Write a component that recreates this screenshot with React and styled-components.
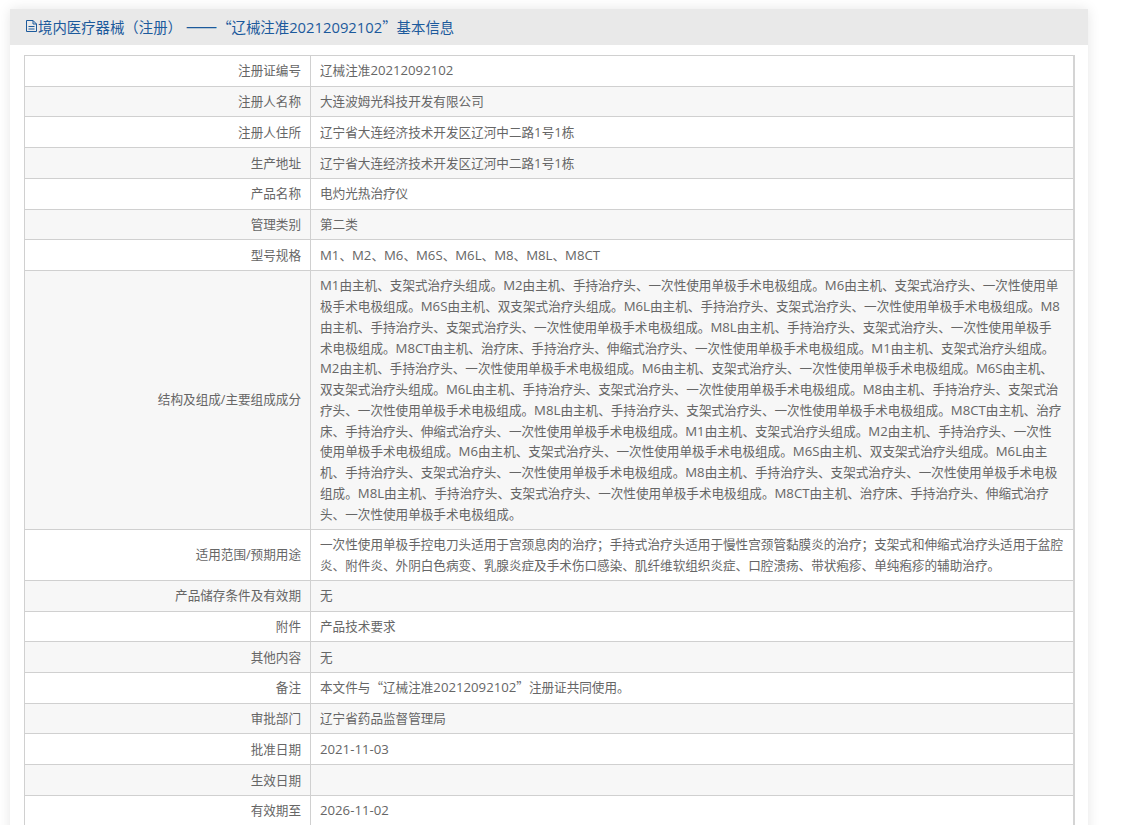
import React from 'react';
import styled, { createGlobalStyle } from 'styled-components';

const GlobalStyle = createGlobalStyle`
    html, body {
        margin: 0;
        height: 825px;
        overflow: hidden;
        background: #fff;
        font-family: "Open Sans", "Noto Sans CJK SC", sans-serif;
    }
`;

const rows = [
    ['注册证编号', '辽械注准20212092102'],
    ['注册人名称', '大连波姆光科技开发有限公司'],
    ['注册人住所', '辽宁省大连经济技术开发区辽河中二路1号1栋'],
    ['生产地址', '辽宁省大连经济技术开发区辽河中二路1号1栋'],
    ['产品名称', '电灼光热治疗仪'],
    ['管理类别', '第二类'],
    ['型号规格', 'M1、M2、M6、M6S、M6L、M8、M8L、M8CT'],
    ['结构及组成/主要组成成分', 'M1由主机、支架式治疗头组成。M2由主机、手持治疗头、一次性使用单极手术电极组成。M6由主机、支架式治疗头、一次性使用单极手术电极组成。M6S由主机、双支架式治疗头组成。M6L由主机、手持治疗头、支架式治疗头、一次性使用单极手术电极组成。M8由主机、手持治疗头、支架式治疗头、一次性使用单极手术电极组成。M8L由主机、手持治疗头、支架式治疗头、一次性使用单极手术电极组成。M8CT由主机、治疗床、手持治疗头、伸缩式治疗头、一次性使用单极手术电极组成。M1由主机、支架式治疗头组成。M2由主机、手持治疗头、一次性使用单极手术电极组成。M6由主机、支架式治疗头、一次性使用单极手术电极组成。M6S由主机、双支架式治疗头组成。M6L由主机、手持治疗头、支架式治疗头、一次性使用单极手术电极组成。M8由主机、手持治疗头、支架式治疗头、一次性使用单极手术电极组成。M8L由主机、手持治疗头、支架式治疗头、一次性使用单极手术电极组成。M8CT由主机、治疗床、手持治疗头、伸缩式治疗头、一次性使用单极手术电极组成。M1由主机、支架式治疗头组成。M2由主机、手持治疗头、一次性使用单极手术电极组成。M6由主机、支架式治疗头、一次性使用单极手术电极组成。M6S由主机、双支架式治疗头组成。M6L由主机、手持治疗头、支架式治疗头、一次性使用单极手术电极组成。M8由主机、手持治疗头、支架式治疗头、一次性使用单极手术电极组成。M8L由主机、手持治疗头、支架式治疗头、一次性使用单极手术电极组成。M8CT由主机、治疗床、手持治疗头、伸缩式治疗头、一次性使用单极手术电极组成。'],
    ['适用范围/预期用途', '一次性使用单极手控电刀头适用于宫颈息肉的治疗；手持式治疗头适用于慢性宫颈管黏膜炎的治疗；支架式和伸缩式治疗头适用于盆腔炎、附件炎、外阴白色病变、乳腺炎症及手术伤口感染、肌纤维软组织炎症、口腔溃疡、带状疱疹、单纯疱疹的辅助治疗。'],
    ['产品储存条件及有效期', '无'],
    ['附件', '产品技术要求'],
    ['其他内容', '无'],
    ['备注', '本文件与“辽械注准20212092102”注册证共同使用。'],
    ['审批部门', '辽宁省药品监督管理局'],
    ['批准日期', '2021-11-03'],
    ['生效日期', ''],
    ['有效期至', '2026-11-02'],
];

const Latin = styled.span`
    font-size: ${p => p.$size};
    line-height: 0;
`;

const Quote = styled.span`
    font-family: "Noto Sans CJK SC", sans-serif;
    line-height: 0;
`;

// latin runs sit a little larger than the chinese around them
function Mixed({ text, size }) {
    return text.split(/([A-Za-z0-9-]+|[“”])/).map((part, i) => {
        if (part === '“' || part === '”') return <Quote key={i}>{part}</Quote>;
        if (i % 2 === 1) return <Latin key={i} $size={size}>{part}</Latin>;
        return part;
    });
}

const Panel = styled.section`
    width: 1078px;
    margin: 9px 0 0 10px;
    padding-bottom: 20px;
    background: #fff;
    box-shadow: 0 0 12px rgba(0, 0, 0, 0.1);
`;

const Header = styled.h2`
    display: flex;
    align-items: center;
    box-sizing: border-box;
    height: 36px;
    margin: 0;
    padding: 0 0 2px 15px;
    background: #e9e9e9;
    color: #1c5a9c;
    font-size: 14.4px;
    font-weight: 400;
`;

const Title = styled.span`
    white-space: pre;
`;

const Dash = styled.span`
    font-family: "Noto Sans CJK SC", sans-serif;
    font-size: 18.8px;
    line-height: 0;
`;

const Icon = styled.svg`
    width: 13px;
    height: 14px;
    flex: none;
    fill: none;
    stroke: currentColor;
    stroke-width: 1;
`;

const Table = styled.table`
    width: 1051px;
    margin: 10px 0 0 14px;
    border-collapse: collapse;
    table-layout: fixed;
    color: #666;
    font-size: 12.6px;
    line-height: 20.8px;
`;

const Row = styled.tr`
    background: ${p => (p.$striped ? '#f7f7f7' : '#fff')};
`;

const Label = styled.th`
    box-sizing: border-box;
    width: 286px;
    height: 30.71px;
    padding: 5.2px 9px 3.2px;
    border: 1px solid #d0d0d0;
    font-weight: 400;
    text-align: right;
`;

const Value = styled.td`
    box-sizing: border-box;
    padding: 5.2px 9px 3.2px;
    border: 1px solid #d0d0d0;
    border-right: 2px solid #d4d4d4;
    word-break: break-all;
`;

export default function App() {
    return (
        <>
            <GlobalStyle />
            <Panel>
                <Header>
                    <Icon viewBox="0 0 13 14">
                        <path d="M1.5 1.5h6.5l3.5 3.5v7.5h-10z" />
                        <path d="M8 1.5v3.5h3.5M3.5 7.5h6M3.5 10h6" />
                    </Icon>
                    <Title>
                        境内医疗器械（注册） <Dash>——</Dash>
                        <Mixed text="“辽械注准20212092102”基本信息" size="14.8px" />
                    </Title>
                </Header>
                <Table>
                    <tbody>
                        {rows.map(([label, value], i) => (
                            <Row key={label} $striped={i % 2 === 1}>
                                <Label><Mixed text={label} size="13.2px" /></Label>
                                <Value><Mixed text={value} size="13.2px" /></Value>
                            </Row>
                        ))}
                    </tbody>
                </Table>
            </Panel>
        </>
    );
}
